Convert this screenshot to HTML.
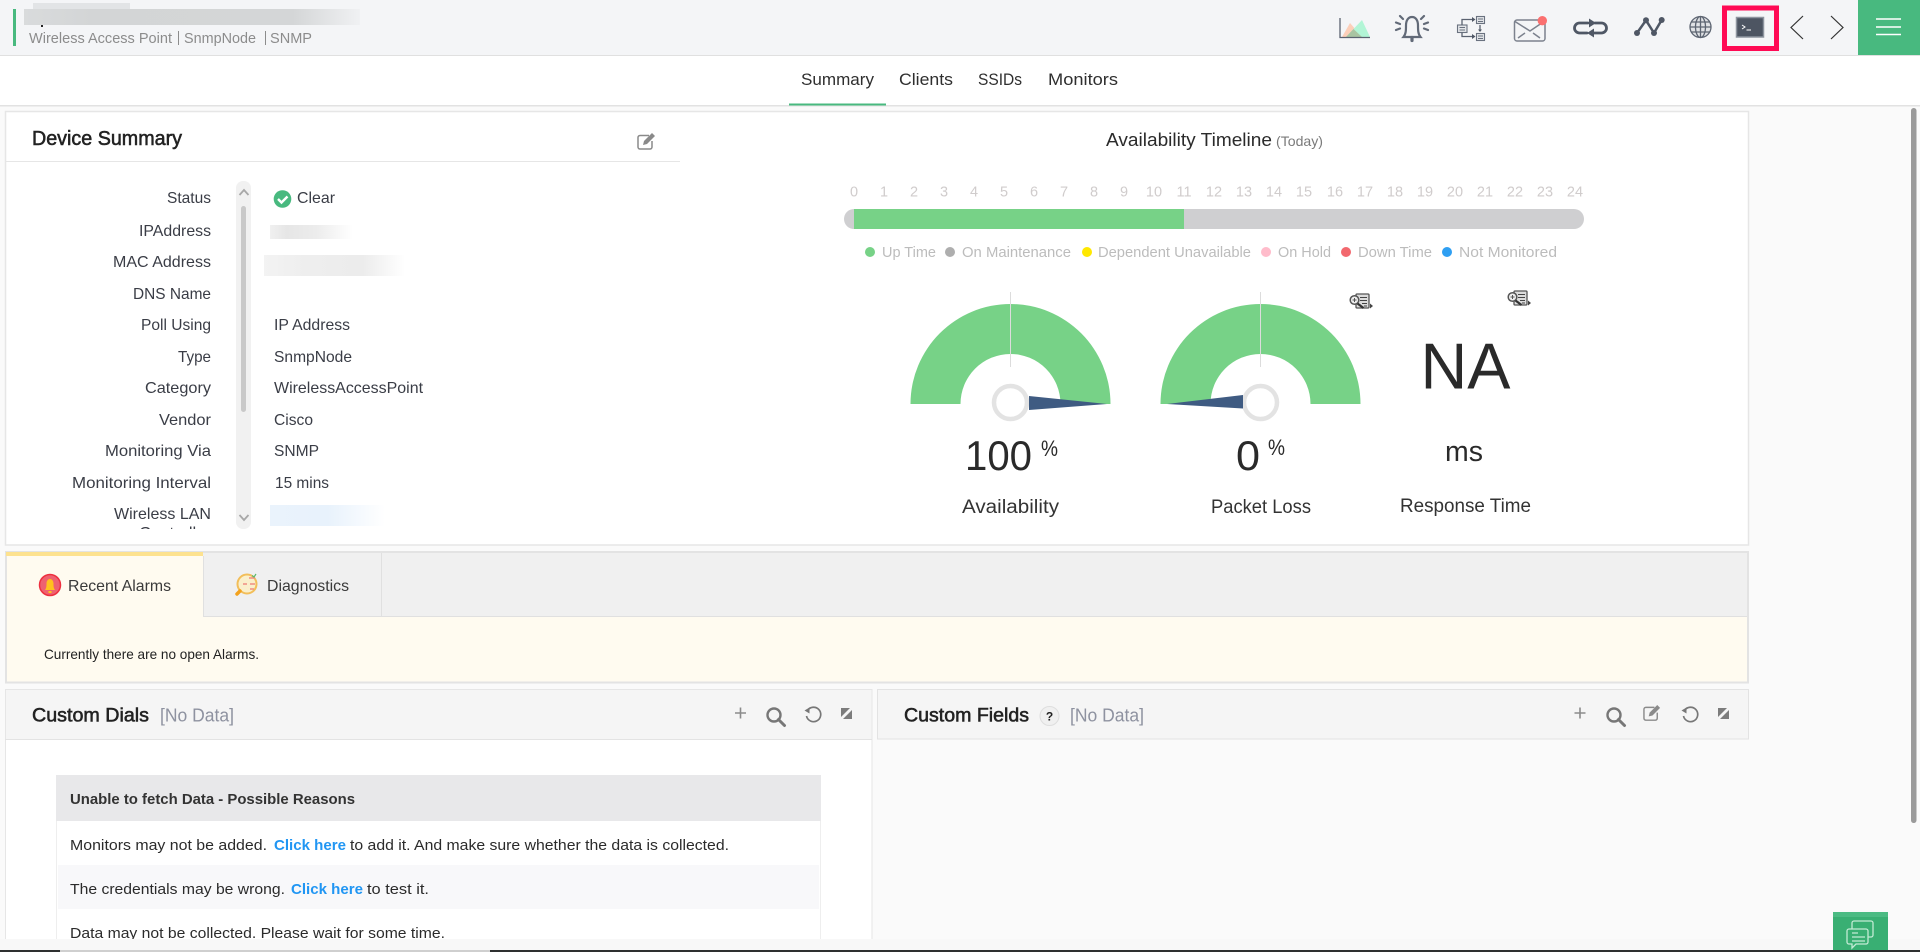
<!DOCTYPE html>
<html lang="en"><head><meta charset="utf-8"><title>Device Summary</title>
<style>
html,body{margin:0;padding:0;width:1920px;height:952px;overflow:hidden;background:#fafafa}
svg{display:block;font-family:"Liberation Sans",sans-serif}
text{white-space:pre}
.m{stroke-width:.55px}
</style></head><body>
<svg width="1920" height="952" viewBox="0 0 1920 952" xmlns="http://www.w3.org/2000/svg">
<defs>
<linearGradient id="gh"><stop offset="0" stop-color="#d9dbdc"/><stop offset=".2" stop-color="#d3d5d6"/><stop offset=".8" stop-color="#d4d6d7"/><stop offset="1" stop-color="#f0f1f3"/></linearGradient>
<linearGradient id="gi"><stop offset="0" stop-color="#f0f0f0"/><stop offset=".2" stop-color="#e6e6e6"/><stop offset=".55" stop-color="#ececec"/><stop offset="1" stop-color="#fff"/></linearGradient>
<linearGradient id="gm"><stop offset="0" stop-color="#f3f3f3"/><stop offset=".3" stop-color="#eee"/><stop offset=".7" stop-color="#ececec"/><stop offset="1" stop-color="#fff"/></linearGradient>
<linearGradient id="gw"><stop offset="0" stop-color="#eaf3fc"/><stop offset=".5" stop-color="#e8f2fc"/><stop offset="1" stop-color="#fff"/></linearGradient>
<clipPath id="c1"><rect x="5" y="180" width="225" height="349"/></clipPath>
<g id="rep"><rect x="7" y="1" width="13" height="14" rx="1" fill="#dcdcdc" stroke="#555" stroke-width="1.300"/><path d="M11 4.500h7M11 7.500h7M13 10.500h5M15 13h3" stroke="#444" stroke-width="1"/><circle cx="5.500" cy="7" r="4.300" fill="#eee" stroke="#555" stroke-width="1.500"/><path d="M5.500 5v4M3.500 7h4" stroke="#555" stroke-width="1"/><path d="M8.500 10.500l6 4.500" stroke="#333" stroke-width="2.200"/><path d="M21 10.500l3 2.500-3 2.500z" fill="#444"/></g>
<g id="plus"><path d="M-5.500 0h11M0-5.500v11" stroke="#8b8b8b" stroke-width="1.600"/></g>
<g id="mag"><circle cx="8" cy="8" r="6.500" fill="none" stroke="#777" stroke-width="2.400"/><path d="M12.500 12.500l6 6" stroke="#777" stroke-width="3" stroke-linecap="round"/></g>
<g id="ref"><path d="M3.500 4.500A7.200 7.200 0 1 1 2.500 10" fill="none" stroke="#777" stroke-width="1.700"/><path d="M.5 4.500l5-3v6z" fill="#777"/></g>
<g id="exp"><path d="M0 0h9L0 9zM11 2v9H2z" fill="#7c7c7c"/></g>
<g id="edit"><path d="M12 2.500H3a2 2 0 0 0-2 2V14a2 2 0 0 0 2 2h10a2 2 0 0 0 2-2V8" fill="none" stroke="#8a8a8a" stroke-width="1.500"/><path d="M6 12l1-4 8-8 3 3-8 8z" fill="#8a8a8a"/></g>
</defs>

<rect width="1920" height="952" fill="#fafafa"/>

<!-- top header -->
<rect width="1920" height="55" fill="#f4f5f7"/>
<rect y="55" width="1920" height="1" fill="#e0e0e0"/>
<rect x="13" y="9" width="3" height="37" fill="#48b97f"/>
<rect x="33" y="3" width="97" height="7" fill="#e2e4e6"/>
<rect x="24" y="9" width="336" height="16" fill="url(#gh)"/>
<rect x="41" y="25" width="2" height="2" fill="#222"/>
<g font-size="15" fill="#8c8c8c">
<text x="29" y="43" textLength="143" lengthAdjust="spacingAndGlyphs">Wireless Access Point</text>
<rect x="178" y="31" width="1" height="14"/>
<text x="184" y="43" textLength="72" lengthAdjust="spacingAndGlyphs">SnmpNode</text>
<rect x="265" y="31" width="1" height="14"/>
<text x="270" y="43" textLength="42" lengthAdjust="spacingAndGlyphs">SNMP</text>
</g>

<!-- toolbar icons -->
<polygon points="1342,37 1350,23 1362,37" fill="#fccfb9"/>
<polygon points="1346,37 1362,20 1370,37" fill="#b2f5d6"/>
<polygon points="1346,37 1353.500,29 1362,37" fill="#a9c4a2"/>
<path d="M1340 18V37.500H1370" fill="none" stroke="#5a6270" stroke-width="1.300"/>
<!-- bell -->
<g fill="none" stroke="#626a78" stroke-width="2.200" stroke-linecap="round">
<path d="M1403.500 37c2.500-3 2.500-7 2.500-11.500 0-5.500 2.500-8.500 6-8.500s6 3 6 8.500c0 4.500 0 8.500 2.500 11.500z"/>
<path d="M1412 37.500v3" stroke-width="3.200"/>
<path d="M1400 16l3 3M1396 22.500l4 1.500M1396 30l4-1.500M1424 16l-3 3M1428 22.500l-4 1.500M1428 30l-4-1.500"/>
</g>
<!-- topology -->
<g fill="none" stroke="#6a7280" stroke-width="1.100">
<rect x="1476.500" y="16.500" width="8" height="7" fill="#e3e5e8"/>
<rect x="1476.500" y="33.500" width="8" height="7" fill="#e3e5e8"/>
<rect x="1457.500" y="25" width="9.500" height="7.500" fill="#e3e5e8"/>
<path d="M1478 19h5M1478 21.500h5M1478 36h5M1478 38.500h5M1459.500 27.500h5.500M1459.500 30h5.500"/>
<path d="M1462 25v-5.500h10M1462 32.500v4h10M1480 25v5" stroke-width="1.300" stroke="#5a6270"/>
<path d="M1472 17l3.500 2.500-3.500 2.500zM1472 34l3.500 2.500-3.500 2.500zM1478 29.500l2 2.500 2-2.500z" fill="#4f5765" stroke="none"/>
</g>
<!-- mail -->
<g fill="none" stroke="#7c828e" stroke-width="1.500">
<rect x="1514.500" y="20" width="30.500" height="21" rx="2.500"/>
<path d="M1515 21.500l15 9.500 14-9.500M1518 38l7-5M1540 38l-7-5"/>
</g>
<circle cx="1542.300" cy="20.700" r="4.700" fill="#fb7070"/>
<!-- loop -->
<g fill="none" stroke="#4f5765" stroke-width="2.800" stroke-linecap="round">
<path d="M1588 23H1579.500a5 5 0 0 0 0 10H1587M1595 23H1601.500a5 5 0 0 1 0 10H1592"/>
</g>
<path d="M1589 18.500l7 4.500-7 4.500zM1594 28.500l-7 4.500 7 4.500z" fill="#4f5765"/>
<!-- graph -->
<g fill="#4f5765"><path d="M1637 33l9-12.700 8 12.700 7.700-13" fill="none" stroke="#4f5765" stroke-width="2.500"/><circle cx="1637" cy="33" r="3"/><circle cx="1646" cy="20.300" r="3"/><circle cx="1654" cy="33" r="3"/><circle cx="1661.700" cy="20" r="3"/></g>
<!-- globe -->
<g fill="none" stroke="#5d6572" stroke-width="1.300">
<circle cx="1700.500" cy="27" r="10.500" fill="#e0e2e5"/><ellipse cx="1700.500" cy="27" rx="5" ry="10.500"/><path d="M1700.500 16.500v21M1690 27h21M1691.500 22h18M1691.500 32h18"/>
</g>

<!-- red highlight + terminal -->
<rect x="1724.500" y="8" width="52" height="40.500" fill="none" stroke="#ff0a54" stroke-width="5"/>
<rect x="1736.500" y="17.500" width="27" height="19.500" fill="#4d5562" stroke="#8d949e" stroke-width="1.500"/>
<path d="M1742 25l3 2-3 2M1746.500 30h4.500" fill="none" stroke="#fff" stroke-width="1"/>
<!-- chevrons -->
<path d="M1803 16l-12 11.500 12 11.500M1831 16l12 11.500-12 11.500" fill="none" stroke="#333" stroke-width="1.200"/>
<!-- menu -->
<rect x="1858" width="62" height="55" fill="#48b97f"/>
<path d="M1876 19h25M1876 27h25M1876 34.500h25" stroke="#fff" stroke-width="1.400"/>

<!-- nav tabs -->
<rect y="56" width="1920" height="49" fill="#fff"/>
<rect y="105" width="1920" height="1.500" fill="#e2e2e2"/>
<rect x="789" y="103.500" width="97" height="2" fill="#48b97f"/>
<g font-size="17" fill="#2f2f2f">
<text x="801" y="85" textLength="73" lengthAdjust="spacingAndGlyphs">Summary</text>
<text x="899" y="85" textLength="54" lengthAdjust="spacingAndGlyphs">Clients</text>
<text x="978" y="85" textLength="44" lengthAdjust="spacingAndGlyphs">SSIDs</text>
<text x="1048" y="85" textLength="70" lengthAdjust="spacingAndGlyphs">Monitors</text>
</g>

<!-- device panel -->
<rect x="5.500" y="111.500" width="1743" height="433.500" fill="#fff" stroke="#e6e6e6" stroke-width="1.500"/>
<text x="32" y="145" font-size="20" fill="#222" stroke="#222" class="m" textLength="150" lengthAdjust="spacingAndGlyphs">Device Summary</text>
<rect x="5" y="161" width="675" height="1" fill="#e6e6e6"/>
<use href="#edit" x="637" y="133"/>

<g font-size="16" fill="#3a3d46" text-anchor="end">
<text x="211" y="203" textLength="44" lengthAdjust="spacingAndGlyphs">Status</text>
<text x="211" y="236" textLength="72" lengthAdjust="spacingAndGlyphs">IPAddress</text>
<text x="211" y="267" textLength="98" lengthAdjust="spacingAndGlyphs">MAC Address</text>
<text x="211" y="299" textLength="78" lengthAdjust="spacingAndGlyphs">DNS Name</text>
<text x="211" y="330" textLength="70" lengthAdjust="spacingAndGlyphs">Poll Using</text>
<text x="211" y="362" textLength="33" lengthAdjust="spacingAndGlyphs">Type</text>
<text x="211" y="393" textLength="66" lengthAdjust="spacingAndGlyphs">Category</text>
<text x="211" y="425" textLength="52" lengthAdjust="spacingAndGlyphs">Vendor</text>
<text x="211" y="456" textLength="106" lengthAdjust="spacingAndGlyphs">Monitoring Via</text>
<text x="211" y="488" textLength="139" lengthAdjust="spacingAndGlyphs">Monitoring Interval</text>
<text x="211" y="519" textLength="97" lengthAdjust="spacingAndGlyphs">Wireless LAN</text>
<g clip-path="url(#c1)"><text x="211" y="538" textLength="72" lengthAdjust="spacingAndGlyphs">Controller</text></g>
</g>
<rect x="236" y="181" width="15" height="348" rx="7" fill="#f1f1f1"/>
<rect x="241" y="206" width="5" height="206" rx="2.500" fill="#c9c9c9"/>
<path d="M239.500 195l4.500-5 4.500 5M239.500 515l4.500 5 4.500-5" fill="none" stroke="#a8a8a8" stroke-width="1.800"/>

<circle cx="282.500" cy="199" r="8.800" fill="#48b97f"/>
<path d="M278 199l3.500 3.500 6-6" fill="none" stroke="#fff" stroke-width="2.400"/>
<g font-size="16" fill="#3a3d46">
<text x="297" y="203" textLength="38" lengthAdjust="spacingAndGlyphs">Clear</text>
<text x="274" y="330" textLength="76" lengthAdjust="spacingAndGlyphs">IP Address</text>
<text x="274" y="362" textLength="78" lengthAdjust="spacingAndGlyphs">SnmpNode</text>
<text x="274" y="393" textLength="149" lengthAdjust="spacingAndGlyphs">WirelessAccessPoint</text>
<text x="274" y="425" textLength="39" lengthAdjust="spacingAndGlyphs">Cisco</text>
<text x="274" y="456" textLength="45" lengthAdjust="spacingAndGlyphs">SNMP</text>
<text x="275" y="488" textLength="54" lengthAdjust="spacingAndGlyphs">15 mins</text>
</g>
<rect x="270" y="225" width="83" height="14" fill="url(#gi)"/>
<rect x="264" y="255" width="141" height="21" fill="url(#gm)"/>
<rect x="270" y="505" width="115" height="21" fill="url(#gw)"/>

<!-- timeline -->
<text x="1106" y="146" font-size="18" fill="#2b2b2b" textLength="166" lengthAdjust="spacingAndGlyphs">Availability Timeline</text>
<text x="1276" y="146" font-size="14" fill="#7a7a7a" textLength="47" lengthAdjust="spacingAndGlyphs">(Today)</text>
<g font-size="14.500" fill="#d0cccc" text-anchor="middle">
<text x="854" y="196.500">0</text><text x="884" y="196.500">1</text><text x="914" y="196.500">2</text><text x="944" y="196.500">3</text><text x="974" y="196.500">4</text><text x="1004" y="196.500">5</text><text x="1034" y="196.500">6</text><text x="1064" y="196.500">7</text><text x="1094" y="196.500">8</text><text x="1124" y="196.500">9</text><text x="1154" y="196.500">10</text><text x="1184" y="196.500">11</text><text x="1214" y="196.500">12</text><text x="1244" y="196.500">13</text><text x="1274" y="196.500">14</text><text x="1304" y="196.500">15</text><text x="1335" y="196.500">16</text><text x="1365" y="196.500">17</text><text x="1395" y="196.500">18</text><text x="1425" y="196.500">19</text><text x="1455" y="196.500">20</text><text x="1485" y="196.500">21</text><text x="1515" y="196.500">22</text><text x="1545" y="196.500">23</text><text x="1575" y="196.500">24</text>
</g>
<rect x="844" y="209" width="740" height="20" rx="10" fill="#cfcfd1"/>
<rect x="854" y="209" width="330" height="20" fill="#77d287"/>
<g>
<circle cx="870" cy="252" r="5" fill="#77d287"/><circle cx="950" cy="252" r="5" fill="#aeaeae"/><circle cx="1087" cy="252" r="5" fill="#ffe800"/><circle cx="1266" cy="252" r="5" fill="#ffbccb"/><circle cx="1346" cy="252" r="5" fill="#f2686e"/><circle cx="1447" cy="252" r="5" fill="#2f9ff2"/>
</g>
<g font-size="15" fill="#bcbcbc">
<text x="882" y="257" textLength="54" lengthAdjust="spacingAndGlyphs">Up Time</text>
<text x="962" y="257" textLength="109" lengthAdjust="spacingAndGlyphs">On Maintenance</text>
<text x="1098" y="257" textLength="153" lengthAdjust="spacingAndGlyphs">Dependent Unavailable</text>
<text x="1278" y="257" textLength="53" lengthAdjust="spacingAndGlyphs">On Hold</text>
<text x="1358" y="257" textLength="74" lengthAdjust="spacingAndGlyphs">Down Time</text>
<text x="1459" y="257" textLength="98" lengthAdjust="spacingAndGlyphs">Not Monitored</text>
</g>

<!-- gauges -->
<path d="M910.500 404A100 100 0 0 1 1110.500 404H1060.500A50 50 0 0 0 960.500 404Z" fill="#77d287"/>
<rect x="1010" y="292" width="1" height="75" fill="#dcdcdc"/>
<circle cx="1010.500" cy="402.500" r="16.500" fill="#fff" stroke="#e3e3e3" stroke-width="4.500"/>
<polygon points="1029,396 1107,404 1029,410" fill="#3f5b82"/>
<text x="965" y="470" font-size="42" fill="#2a2a2a" textLength="67" lengthAdjust="spacingAndGlyphs">100</text>
<text x="1041" y="456" font-size="22" fill="#2a2a2a" textLength="17" lengthAdjust="spacingAndGlyphs">%</text>
<text x="962" y="513" font-size="19" fill="#333" textLength="97" lengthAdjust="spacingAndGlyphs">Availability</text>

<path d="M1160.500 404A100 100 0 0 1 1360.500 404H1310.500A50 50 0 0 0 1210.500 404Z" fill="#77d287"/>
<rect x="1260" y="292" width="1" height="75" fill="#dcdcdc"/>
<circle cx="1260.500" cy="402.500" r="16.500" fill="#fff" stroke="#e3e3e3" stroke-width="4.500"/>
<polygon points="1243,395 1167,404 1243,408.500" fill="#3f5b82"/>
<text x="1236" y="470" font-size="42" fill="#2a2a2a" textLength="24" lengthAdjust="spacingAndGlyphs">0</text>
<text x="1268" y="455" font-size="22" fill="#2a2a2a" textLength="17" lengthAdjust="spacingAndGlyphs">%</text>
<text x="1211" y="513" font-size="19" fill="#333" textLength="100" lengthAdjust="spacingAndGlyphs">Packet Loss</text>

<use href="#rep" x="1349" y="293"/>
<use href="#rep" x="1507" y="290"/>
<text x="1420.500" y="388.500" font-size="65" fill="#2a2a2a" textLength="90" lengthAdjust="spacingAndGlyphs">NA</text>
<text x="1445" y="461" font-size="29" fill="#2a2a2a" textLength="38" lengthAdjust="spacingAndGlyphs">ms</text>
<text x="1400" y="512" font-size="19" fill="#333" textLength="131" lengthAdjust="spacingAndGlyphs">Response Time</text>

<!-- alarms panel -->
<rect x="6" y="552" width="1742" height="130.500" fill="#fffbf0" stroke="#e3e3e3" stroke-width="2"/>
<rect x="7" y="553" width="1740" height="63" fill="#f0f0f0"/>
<rect x="7" y="616" width="1740" height="1" fill="#e0e0e0"/>
<rect x="7" y="553" width="196" height="64" fill="#fffbf0"/>
<rect x="6" y="552" width="197" height="4" fill="#fde28f"/>
<rect x="203" y="556" width="1" height="60" fill="#e0e0e0"/>
<rect x="381" y="553" width="1" height="63" fill="#e0e0e0"/>
<circle cx="50" cy="585" r="10.500" fill="#ee6270" stroke="#ee2f3f" stroke-width="1.500"/>
<path d="M45 590c1.500-2 1.500-4 1.500-6.500 0-2.500 1.500-4.500 3.500-4.500s3.500 2 3.500 4.500c0 2.500 0 4.500 1.500 6.500zM48.500 591h3v2h-3z" fill="#ffc21e"/>
<circle cx="247" cy="584" r="9.500" fill="#fcefc8" stroke="#f3b94a" stroke-width="2" opacity=".9"/>
<path d="M240 591l-3 3" stroke="#f3a21e" stroke-width="3.500" stroke-linecap="round"/>
<path d="M249 578h6M243 584h4M250 584h5M250 589h4" stroke="#ef8d83" stroke-width="1.500"/>
<path d="M252 575.500l2 1.500 2-3" stroke="#5db96b" stroke-width="1.200" fill="none"/>
<text x="68" y="591" font-size="16" fill="#3a3a3a" textLength="103" lengthAdjust="spacingAndGlyphs">Recent Alarms</text>
<text x="267" y="591" font-size="16" fill="#3a3a3a" textLength="82" lengthAdjust="spacingAndGlyphs">Diagnostics</text>
<text x="44" y="659" font-size="14" fill="#222" textLength="215" lengthAdjust="spacingAndGlyphs">Currently there are no open Alarms.</text>

<!-- custom dials -->
<rect x="5.500" y="689.500" width="866.500" height="262" fill="#fff" stroke="#e6e6e6" stroke-width="1"/>
<rect x="6" y="690" width="865.500" height="49" fill="#f5f5f5"/>
<rect x="5" y="739" width="867" height="1" fill="#e3e3e3"/>
<text x="32" y="721.500" font-size="19" fill="#222" stroke="#222" class="m" textLength="117" lengthAdjust="spacingAndGlyphs">Custom Dials</text>
<text x="160" y="721.500" font-size="18" fill="#8e92a0" textLength="74" lengthAdjust="spacingAndGlyphs">[No Data]</text>
<use href="#plus" x="740.500" y="713"/>
<use href="#mag" x="766" y="707"/>
<use href="#ref" x="804" y="706"/>
<use href="#exp" x="841" y="708"/>

<!-- custom fields -->
<rect x="877.500" y="689.500" width="871" height="49.500" fill="#f5f5f5" stroke="#e3e3e3" stroke-width="1"/>
<text x="904" y="721.500" font-size="19" fill="#222" stroke="#222" class="m" textLength="125" lengthAdjust="spacingAndGlyphs">Custom Fields</text>
<circle cx="1049.500" cy="716" r="9.500" fill="#f0f0f0" stroke="#dedede"/>
<text x="1049.500" y="720.500" font-size="12" font-weight="700" fill="#222" text-anchor="middle">?</text>
<text x="1070" y="721.500" font-size="18" fill="#8e92a0" textLength="74" lengthAdjust="spacingAndGlyphs">[No Data]</text>
<use href="#plus" x="1580" y="713"/>
<use href="#mag" x="1606" y="707"/>
<g transform="translate(1643 705) scale(.95)"><use href="#edit"/></g>
<use href="#ref" x="1681" y="706"/>
<use href="#exp" x="1718" y="708"/>

<!-- table -->
<rect x="56.500" y="775.500" width="764" height="175" fill="#fff" stroke="#eee"/>
<rect x="56" y="775" width="765" height="46" fill="#e8e8ea"/>
<rect x="58" y="865" width="761" height="44" fill="#f8f8fa"/>
<text x="70" y="804" font-size="15" font-weight="700" fill="#333" textLength="285" lengthAdjust="spacingAndGlyphs">Unable to fetch Data - Possible Reasons</text>
<g font-size="15" fill="#2b2b2b">
<text x="70" y="850" textLength="197" lengthAdjust="spacingAndGlyphs">Monitors may not be added.</text>
<text x="274" y="850" font-weight="700" fill="#2196f3" textLength="72" lengthAdjust="spacingAndGlyphs">Click here</text>
<text x="350" y="850" textLength="379" lengthAdjust="spacingAndGlyphs">to add it. And make sure whether the data is collected.</text>
<text x="70" y="894" textLength="215" lengthAdjust="spacingAndGlyphs">The credentials may be wrong.</text>
<text x="291" y="894" font-weight="700" fill="#2196f3" textLength="72" lengthAdjust="spacingAndGlyphs">Click here</text>
<text x="367" y="894" textLength="62" lengthAdjust="spacingAndGlyphs">to test it.</text>
<text x="70" y="938" textLength="375" lengthAdjust="spacingAndGlyphs">Data may not be collected. Please wait for some time.</text>
</g>

<!-- page scrollbar -->
<rect x="1911" y="108" width="5.500" height="715" rx="2.700" fill="#9a9a9a"/>

<!-- bottom -->
<rect y="939" width="1920" height="11" fill="#f8f8f8"/>
<rect x="1833" y="912" width="55" height="38" fill="#39af73"/>
<rect x="1833" y="912" width="55" height="5" fill="#4bbb83"/>
<g fill="none" stroke="#c3ead5" stroke-width="1.300">
<path d="M1852 932v-9a2 2 0 0 1 2-2h17a2 2 0 0 1 2 2v12a2 2 0 0 1-2 2h-3"/>
<path d="M1849 929h17a2 2 0 0 1 2 2v11a2 2 0 0 1-2 2h-10l-4 4v-4h-3a2 2 0 0 1-2-2v-11a2 2 0 0 1 2-2z" fill="#39af73"/>
<path d="M1852 933h6M1852 937h13M1852 941h13"/>
</g>
<rect y="950" width="1920" height="2" fill="#2e3030"/>
<rect x="60" y="950" width="430" height="2" fill="#cfcfcf"/>
</svg>
</body></html>
